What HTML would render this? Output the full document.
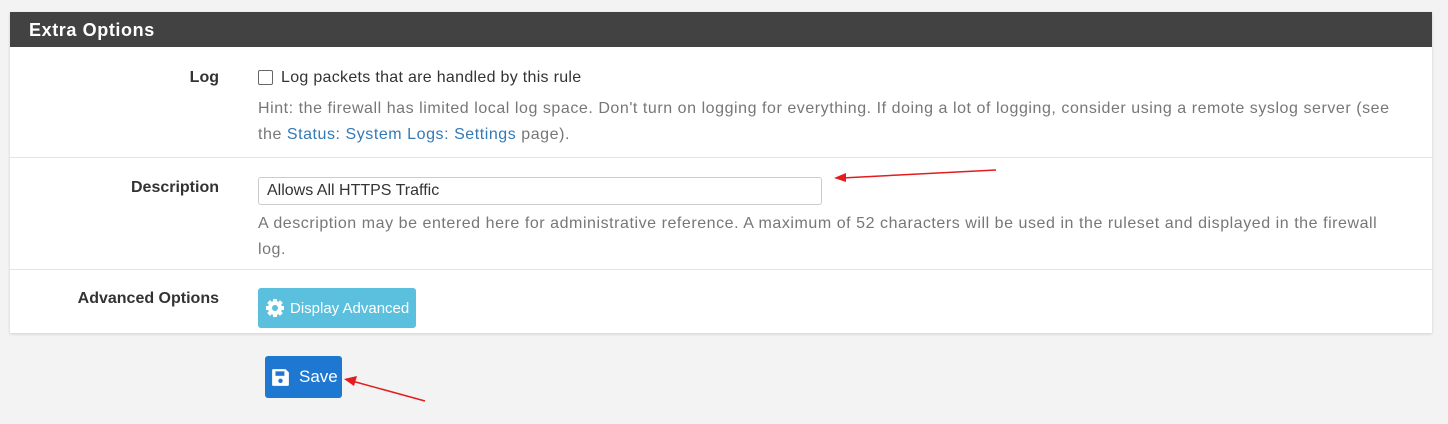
<!DOCTYPE html>
<html><head><style>
body{margin:0;width:1448px;height:424px;background:#f3f3f3;font-family:"Liberation Sans",sans-serif;position:relative;overflow:hidden}
.panel{position:absolute;left:10px;top:12px;width:1422px;height:321px;background:#fff;box-shadow:0 1px 3px rgba(0,0,0,.15)}
.hd{height:35px;background:#424242;color:#fff;font-size:18px;font-weight:bold;letter-spacing:.6px;line-height:36px;padding-left:19px}
.row{position:absolute;left:0;width:1422px;border-top:1px solid #e4e4e4}
.lbl{position:absolute;right:1213px;font-weight:bold;font-size:16px;color:#333}
.c{position:absolute;left:248px;font-size:16px;color:#333}
.hint{color:#777;font-size:16px;line-height:26px;letter-spacing:.55px;white-space:nowrap}
a{color:#337ab7;text-decoration:none}
.arrow{position:absolute}
</style></head><body>
<div class="panel">
<div class="hd">Extra Options</div>
<div class="row" style="top:35px;border-top:none;height:110px">
 <div class="lbl" style="top:22px">Log</div>
 <div class="c" style="top:22px;letter-spacing:.3px"><span style="display:inline-block;width:13px;height:13px;border:1.5px solid #666;border-radius:2px;vertical-align:-3px;margin-right:8px"></span>Log packets that are handled by this rule</div>
 <div class="c hint" style="top:49px">Hint: the firewall has limited local log space. Don't turn on logging for everything. If doing a lot of logging, consider using a remote syslog server (see<br>the <a>Status: System Logs: Settings</a> page).</div>
</div>
<div class="row" style="top:145px;height:111px">
 <div class="lbl" style="top:21px">Description</div>
 <div class="c" style="top:19px;width:564px;height:28px;border:1px solid #ccc;border-radius:3px;box-sizing:border-box;padding-left:8px;line-height:26px">Allows All HTTPS Traffic</div>
 <div class="c hint" style="top:53px">A description may be entered here for administrative reference. A maximum of 52 characters will be used in the ruleset and displayed in the firewall<br>log.</div>
</div>
<div class="row" style="top:257px;height:64px">
 <div class="lbl" style="top:20px">Advanced Options</div>
 <div class="c" style="top:18px;width:158px;height:40px;background:#5bc0de;border-radius:3px;color:#fff;font-size:15px;line-height:42px;box-sizing:border-box;padding-left:32px">
 <svg style="position:absolute;left:7px;top:10px" width="20" height="20" viewBox="0 0 20 20"><g fill="#fff"><circle cx="10" cy="10" r="7"/><g stroke="#fff" stroke-width="4"><line x1="10" y1="1" x2="10" y2="19"/><line x1="1" y1="10" x2="19" y2="10"/><line x1="3.6" y1="3.6" x2="16.4" y2="16.4"/><line x1="16.4" y1="3.6" x2="3.6" y2="16.4"/></g></g><circle cx="10" cy="10" r="3" fill="#5bc0de"/></svg>
 Display Advanced</div>
</div>
</div>
<div style="position:absolute;left:265px;top:356px;width:77px;height:42px;background:#1e78d2;border-radius:3px;color:#fff;font-size:17px;line-height:42px;box-sizing:border-box;padding-left:34px">
<svg style="position:absolute;left:6px;top:12px" width="19" height="19" viewBox="0 0 17 17"><path d="M1 2a1 1 0 0 1 1-1h11l3 3v11a1 1 0 0 1-1 1H2a1 1 0 0 1-1-1z" fill="#fff"/><rect x="4" y="3" width="8" height="4" fill="#1e78d2"/><circle cx="8.5" cy="11.5" r="2" fill="#1e78d2"/></svg>Save</div>
<svg class="arrow" style="left:0;top:0" width="1448" height="424">
<line x1="996" y1="170" x2="842" y2="178" stroke="#e31c1c" stroke-width="1.5"/><polygon points="834,178 846,173 846,182" fill="#e31c1c"/>
<line x1="425" y1="401" x2="352" y2="381" stroke="#e31c1c" stroke-width="1.5"/><polygon points="344,379 357,376 354,386" fill="#e31c1c"/>
</svg>
</body></html>
